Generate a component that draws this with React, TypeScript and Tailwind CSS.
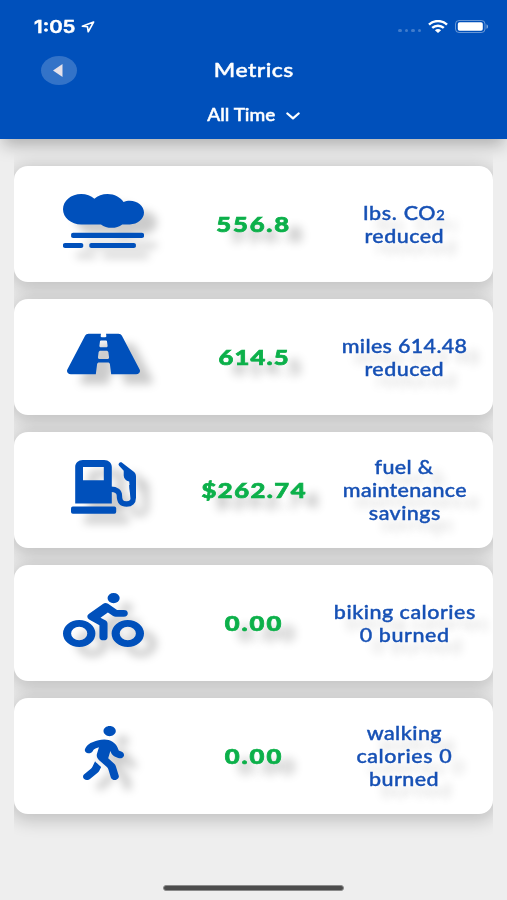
import React from 'react';
import { FaSmog, FaRoad, FaBiking, FaWalking } from 'react-icons/fa';
import { clsx } from 'clsx';

interface LabelLine {
  text: React.ReactNode;
  className: string;
}

interface Metric {
  id: string;
  icon: React.ComponentType<React.SVGProps<SVGSVGElement>>;
  iconClass: string;
  value: string;
  valueClass: string;
  label: LabelLine[];
}

const FuelPump: React.FC<React.SVGProps<SVGSVGElement>> = (props) => (
  <svg viewBox="0 0 65 54" fill="currentColor" {...props}>
    <path fillRule="evenodd" d="M4.2 43.5V7c0-4 3.2-7 7.6-7h21.4c4.4 0 7.6 3 7.6 7v36.5zM12 7v13.3h20.8V7z" />
    <rect x="0" y="46.6" width="45.2" height="7.2" rx="1.8" />
    <path
      d="M40 29.2c5.3 0 8.4 2.3 8.4 6.2 0 5 1 8.6 7.2 8.6 4.6 0 6.8-2.5 6.6-6.3-.2-4.2-1.4-7.7-1.3-12.7"
      fill="none"
      stroke="currentColor"
      strokeWidth="5.4"
    />
    <path d="M48.1 5.7c-1.6-1.5.9-4.3 3-3l12 9.3c1.4 1.2 1.9 2.7 1.9 4.5V38l-5.2.2-1.6-16.7c-3.5-.7-5.5-3-5.5-6v-4.7z" />
  </svg>
);

const metrics: Metric[] = [
  {
    id: 'co2',
    icon: FaSmog,
    iconClass: 'w-[81px]',
    value: '556.8',
    valueClass: 'tracking-[1.5px]',
    label: [
      { text: <>lbs. CO<span className="text-[13px] leading-none">2</span></>, className: 'tracking-[0.6px]' },
      { text: 'reduced', className: 'tracking-[0.4px]' },
    ],
  },
  {
    id: 'miles',
    icon: FaRoad,
    iconClass: 'w-[73px]',
    value: '614.5',
    valueClass: 'tracking-[0.9px]',
    label: [
      { text: 'miles 614.48', className: 'tracking-[0.3px]' },
      { text: 'reduced', className: 'tracking-[0.4px]' },
    ],
  },
  {
    id: 'fuel',
    icon: FuelPump,
    iconClass: 'w-[65px]',
    value: '$262.74',
    valueClass: 'tracking-[1.2px]',
    label: [
      { text: 'fuel &', className: 'tracking-[0.3px]' },
      { text: 'maintenance', className: 'tracking-[0.25px]' },
      { text: 'savings', className: 'tracking-[0.4px]' },
    ],
  },
  {
    id: 'biking',
    icon: FaBiking,
    iconClass: 'w-[81px]',
    value: '0.00',
    valueClass: 'tracking-[1.6px]',
    label: [
      { text: 'biking calories', className: 'tracking-[0.45px]' },
      { text: '0 burned', className: 'tracking-[0.5px]' },
    ],
  },
  {
    id: 'walking',
    icon: FaWalking,
    iconClass: 'w-[41px]',
    value: '0.00',
    valueClass: 'tracking-[1.6px]',
    label: [
      { text: 'walking', className: 'tracking-[0.4px]' },
      { text: 'calories 0', className: 'tracking-[0.5px]' },
      { text: 'burned', className: 'tracking-[0.4px]' },
    ],
  },
];

const StatusBar: React.FC = () => (
  <div className="flex h-[54px] items-center justify-between pl-[34px] pr-[18px]">
    <div className="flex items-center gap-[6px]">
      <span className="w-[41px] font-['Inter',sans-serif] text-[17px] font-semibold leading-none">
        <span className="inline-block origin-left scale-x-[1.2]">1:05</span>
      </span>
      <svg className="h-3 w-[14px]" viewBox="0 0 14 12" fill="none" stroke="currentColor" strokeWidth="1.6" strokeLinejoin="round">
        <path d="M12.6 1 1.3 5.3l5.2.5.7 5z" />
      </svg>
    </div>
    <div className="mb-[2px] flex items-center gap-[7px]">
      <div className="mt-[9px] flex gap-[3px]">
        {[0, 1, 2, 3].map((i) => (
          <span key={i} className="h-[3px] w-[3.5px] rounded-full bg-white/25" />
        ))}
      </div>
      <svg className="h-[13px] w-5" viewBox="0 0 20 13" fill="none" stroke="currentColor" strokeWidth="2.5">
        <path d="M1 4.7C6-.1 14-.1 19 4.7" />
        <path d="M4.2 7.9c3.3-3 8.3-3 11.6 0" />
        <path d="M6.9 10.2c1.8-1.5 4.4-1.5 6.2 0L10 12.9z" fill="currentColor" stroke="none" />
      </svg>
      <svg className="h-[13px] w-[34px]" viewBox="0 0 34 13" fill="currentColor">
        <rect x="0.5" y="0.5" width="29.5" height="12" rx="3.5" fill="none" stroke="currentColor" strokeOpacity="0.4" />
        <rect x="2.8" y="2.2" width="25" height="8.6" rx="1.8" />
        <path d="M31.5 4.2c2 .8 2 3.8 0 4.6z" fillOpacity="0.5" />
      </svg>
    </div>
  </div>
);

const Header: React.FC = () => (
  <header className="relative z-10 h-[139px] bg-[#0050bb] font-['Lato',sans-serif] text-white shadow-[0_9px_16px_-3px_rgba(0,0,0,0.27)] [-webkit-text-stroke:0.45px_#ffffff]">
    <StatusBar />
    <div className="grid h-[33px] grid-cols-[1fr_auto_1fr] items-center">
      <button className="ml-[41px] flex h-[29px] w-[36px] items-center justify-center rounded-[50%] bg-white/20">
        <svg className="mr-[2px] h-[13px] w-[10px] text-[#e6e2ea]" viewBox="0 0 10 13" fill="currentColor">
          <path d="M9.5 0v13L0 6.5z" />
        </svg>
      </button>
      <h1 className="mb-[3px] scale-x-[1.15] pl-[1px] text-[20px] font-medium leading-none tracking-[0.4px]">Metrics</h1>
    </div>
    <div className="mt-[18px] flex items-center justify-center gap-[15px] pl-[4px]">
      <span className="scale-x-[1.12] text-[17px] font-medium leading-[20px]">All Time</span>
      <svg className="mt-[2px] h-2 w-[14px]" viewBox="0 0 14 8" fill="none" stroke="currentColor" strokeWidth="2.3" strokeLinecap="round" strokeLinejoin="round">
        <path d="M1.4 1.5 7 6.3l5.6-4.8" />
      </svg>
    </div>
  </header>
);

const MetricCard: React.FC<{ metric: Metric }> = ({ metric }) => {
  const Icon = metric.icon;

  return (
    <div className="grid h-[115.5px] grid-cols-[178px_124px_177px] items-center rounded-[14px] bg-white shadow-[0_3px_17px_4px_rgba(0,0,0,0.19)]">
      <div className="mb-[6px] flex justify-center">
        <Icon
          preserveAspectRatio="none"
          className={clsx('h-[54px] text-[#0050bb] drop-shadow-[13px_10px_4px_rgba(0,0,0,0.2)]', metric.iconClass)}
        />
      </div>
      <div className="flex justify-center">
        <span
          className={clsx(
            "scale-x-[1.22] whitespace-nowrap font-['Lato',sans-serif] text-[21px] font-black leading-none text-[#0cb04a] [-webkit-text-stroke:0.7px_#0cb04a] [text-shadow:11px_10px_9px_rgba(0,0,0,0.3)]",
            metric.valueClass
          )}
        >
          {metric.value}
        </span>
      </div>
      <div className="flex flex-col items-center font-['Lato',sans-serif] text-[19px] font-medium leading-[23px] text-[#1751b5] [-webkit-text-stroke:0.4px_#1751b5] [text-shadow:11px_11px_9px_rgba(0,0,0,0.18)]">
        {metric.label.map((line, i) => (
          <span key={i} className={clsx('h-[23px] scale-x-[1.13] whitespace-nowrap', line.className)}>
            {line.text}
          </span>
        ))}
      </div>
    </div>
  );
};

const App: React.FC = () => (
  <div className="flex h-[900px] w-[507px] flex-col overflow-hidden bg-[#eeeeee]">
    <Header />
    {/* Card shadows are cut off at the edges of the list */}
    <main className="mx-[14px] flex flex-1 flex-col gap-[17.5px] overflow-hidden pt-[27px]">
      {metrics.map((metric) => (
        <MetricCard key={metric.id} metric={metric} />
      ))}
    </main>
    <div className="mx-auto mb-[9px] h-[6px] w-[181px] rounded-full border border-[#8b8b8b] bg-[#4c4c4c]" />
  </div>
);

export default App;
